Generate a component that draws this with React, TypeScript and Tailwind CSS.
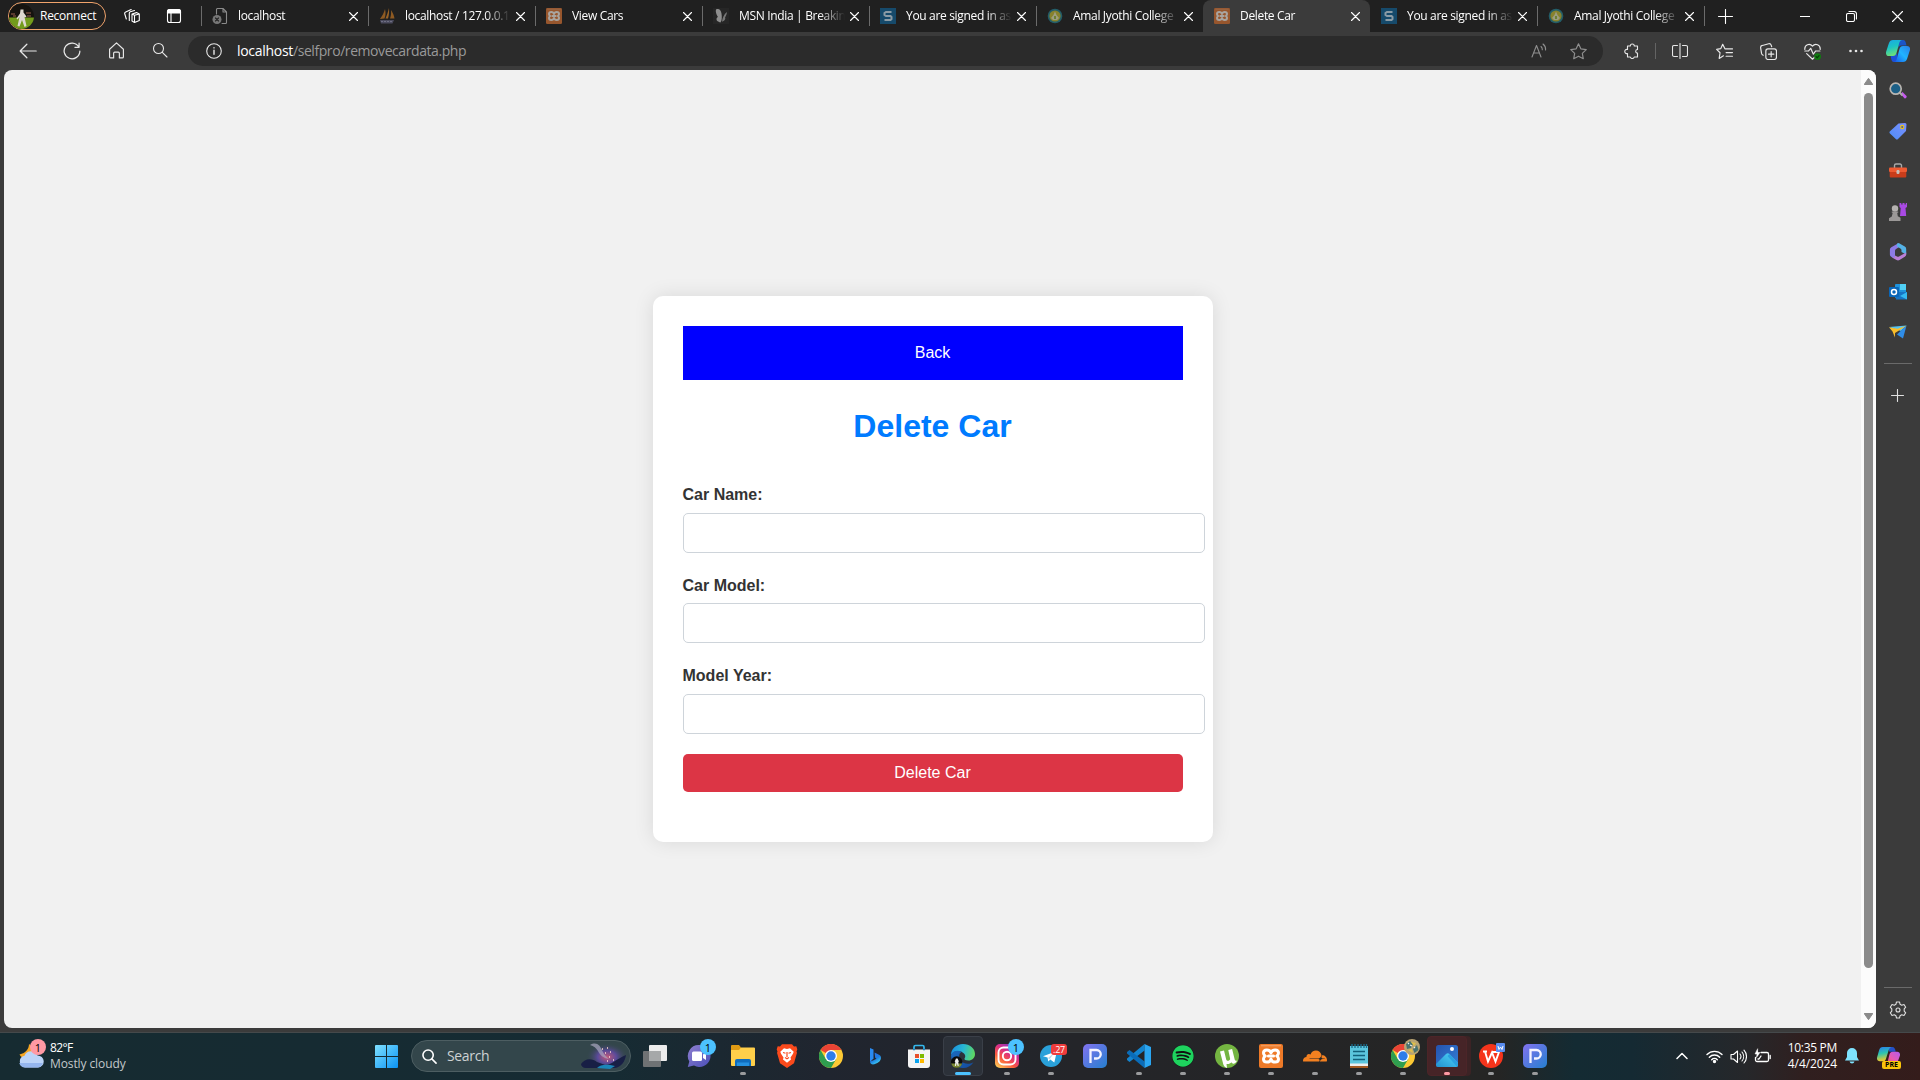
import React from "react";
import { SiCloudflare } from "react-icons/si";
import { FaSpotify } from "react-icons/fa";

type IconProps = { children: React.ReactNode; size?: number; box?: string; className?: string };

function Line({ children, size = 16, box = "0 0 16 16", className = "" }: IconProps) {
  return (
    <svg width={size} height={size} viewBox={box} fill="none" stroke="currentColor" strokeWidth="1.1" strokeLinecap="round" strokeLinejoin="round" className={`shrink-0 ${className}`}>
      {children}
    </svg>
  );
}

function Art({ children, size = 24, box = "0 0 24 24", className = "" }: IconProps) {
  return (
    <svg width={size} height={size} viewBox={box} className={`block shrink-0 ${className}`}>
      {children}
    </svg>
  );
}

/* ---------- tab favicons ---------- */

const BrokenPage = () => (
  <Line className="text-[#8a8a8a]">
    <path d="M4.500 6V1.500a1 1 0 0 1 1-1H11l3.500 3.500V14.500a1 1 0 0 1-1 1H10M11 .5V4h3.500" />
    <circle cx="5" cy="11.500" r="4.500" fill="#777" stroke="none" />
    <path d="M3.500 10l3 3M6.500 10l-3 3" stroke="#222" />
  </Line>
);

const Sails = () => (
  <Art size={16} box="0 0 16 16">
    <path d="M6 1c1 4 .5 7-.5 9.500L1 11c2-3 4-6 5-10z" fill="#8e5a22" />
    <path d="M10 0c.3 4 0 7-1 10.500L6.500 10.500C8 7 9 4 10 0z" fill="#9a6326" />
    <path d="M12 2c2 3 3 5.500 3.500 8.500h-4.500c1-3 1.300-5 1-8.500z" fill="#8e5a22" />
    <path d="M1 12h14l-1.500 3.500H2z" fill="#4a4a5c" />
    <path d="M2 13.500h11" stroke="#77778c" strokeWidth=".8" strokeDasharray="2 1" />
  </Art>
);

const XamppShape = ({ size, plate, ink }: { size: number; plate: string; ink: string }) => (
  <Art size={size}>
    <rect width="24" height="24" rx="2" fill={plate} />
    <path d="M2 1.800h20" stroke={ink} strokeOpacity=".35" strokeWidth="1" />
    <path
      d="M12 9C11 5 4.500 5 4.500 9c0 1.500.9 2.400 1.700 3-.8.600-1.700 1.500-1.700 3 0 4 6.500 4 7.500 0 1 4 7.500 4 7.500 0 0-1.500-.9-2.400-1.700-3 .8-.6 1.700-1.500 1.700-3 0-4-6.500-4-7.500 0z"
      fill="none"
      stroke={ink}
      strokeWidth="3"
      strokeLinejoin="round"
    />
    <path d="M9.500 12h5" stroke={ink} strokeWidth="3.200" strokeLinecap="round" />
  </Art>
);

const XamppFav = () => <XamppShape size={16} plate="#97562d" ink="#a9a49f" />;

const Butterfly = () => (
  <Art size={16} box="0 0 16 16">
    <rect width="16" height="16" fill="#262626" />
    <path d="M3 1.500c3-1.500 5 1 5.500 4 .5 3 .5 7-1 9-2-1-4-1-4-3.500 0-1.500 1.500-2 1.500-2S2 4.500 3 1.500z" fill="#8e8e8e" />
    <path d="M14 4c-3 2-4.500 6-5 9.500 2 0 4-2.500 3-4C13 8 13.800 6 14 4z" fill="#777" />
  </Art>
);

const BlueS = () => (
  <Art size={16} box="0 0 16 16">
    <rect width="16" height="16" fill="#164a6b" />
    <path d="M11.500 4H6L4.500 5v2L6 8h4.500l1 1v2l-1 1H4.500" fill="none" stroke="#8b9ba5" strokeWidth="2" />
  </Art>
);

const Crest = () => (
  <Art size={16} box="0 0 16 16">
    <circle cx="8" cy="8" r="7.300" fill="#235d68" />
    <circle cx="8" cy="8" r="5.600" fill="#87822c" />
    <path d="M8 3.500l1.500 3.500 2.500 3-2 2H6l-2-2 2.500-3z" fill="#9c9d80" />
    <path d="M7 8h2v3H7z" fill="#6c8032" />
  </Art>
);

type Tab = { title: string; icon: () => React.JSX.Element; active?: boolean; edge?: boolean };

const tabs: Tab[] = [
  { title: "localhost", icon: BrokenPage },
  { title: "localhost / 127.0.0.1", icon: Sails },
  { title: "View Cars", icon: XamppFav },
  { title: "MSN India | Breakin", icon: Butterfly },
  { title: "You are signed in as", icon: BlueS },
  { title: "Amal Jyothi College", icon: Crest },
  { title: "Delete Car", icon: XamppFav, active: true },
  { title: "You are signed in as", icon: BlueS, edge: true },
  { title: "Amal Jyothi College", icon: Crest },
];

const fade = "[mask-image:linear-gradient(to_right,black_80px,transparent_106px)]";

function TabStrip() {
  return (
    <header className="flex h-8 shrink-0 items-center bg-[#202020] text-xs tracking-[-0.33px] text-white">
      <div className="ml-2 flex h-7 w-[98px] items-center rounded-full border border-[#f0a36b]">
        <Art size={25} box="0 0 25 25" className="overflow-hidden rounded-full">
          <rect width="25" height="25" fill="#16130f" />
          <rect y="13.500" width="25" height="12" fill="#739b1c" />
          <path d="M2 10h4M17 9h5M4 12h3M18 12h4" stroke="#70483a" strokeWidth="1.500" />
          <path d="M11.500 5.500h3v3l3 4-1.500 1-.5-.5 2 9-2 1-2.500-7-2.500 6.500-2-.5 2-9-2 2.500-1-1 3.500-5z" fill="#ddd8cf" />
        </Art>
        <span className="ml-[6px] tracking-[-0.27px]">Reconnect</span>
      </div>
      <Line className="ml-[18px]">
        <path d="M8 6l4.500-1.400 2.800 1.400v6.500L10.500 14.500 8 13zM8 6l2.500 1.300v7.200M10.500 7.300L15.300 6M5.300 12.500V5.200a1.500 1.500 0 0 1 1-1.400l4.200-1.300M2.300 11l-1.500-5A1.500 1.500 0 0 1 1.700 4l5.500-2.500" />
      </Line>
      <Line className="ml-[26px]">
        <rect x="1.500" y="1.500" width="13" height="13" rx="2" />
        <path d="M1.500 5V3.500a2 2 0 0 1 2-2h9a2 2 0 0 1 2 2V5z" fill="currentColor" />
        <path d="M5 5v9.500" />
      </Line>
      <div className="ml-[19px] flex h-8 items-center">
        {tabs.map((t, i) => {
          const Icon = t.icon;
          const bare = t.active || t.edge;
          return (
            <div key={i} className={t.active ? "flex h-8 w-[167px] items-center rounded-t-lg bg-[#3b3b3b]" : "flex h-8 w-[167px] items-center"}>
              <div className={bare ? "h-5 w-px" : "h-5 w-px bg-[#6b6b6b]"} />
              <div className="ml-[10px] flex">
                <Icon />
              </div>
              <div className={`ml-[10px] w-[108px] overflow-hidden whitespace-nowrap ${fade}`}>{t.title}</div>
              <Line size={9} box="0 0 9 9" className="ml-[3px]">
                <path d="M.5 .5l8 8M8.500 .5l-8 8" />
              </Line>
            </div>
          );
        })}
        <div className="h-5 w-px bg-[#6b6b6b]" />
      </div>
      <Line size={15} box="0 0 15 15" className="ml-[13px]">
        <path d="M7.500 .5v14M.5 7.500h14" />
      </Line>
      <div className="ml-auto flex h-8 items-center">
        <div className="flex w-[46px] justify-center"><Line size={10} box="0 0 10 10"><path d="M0 5.500h10" /></Line></div>
        <div className="flex w-[46px] justify-center">
          <Line size={11} box="0 0 11 11">
            <rect x=".5" y="2.500" width="8" height="8" rx="1.500" />
            <path d="M3 .5h5a2.500 2.500 0 0 1 2.500 2.500v5" />
          </Line>
        </div>
        <div className="flex w-[46px] justify-center"><Line size={11} box="0 0 11 11"><path d="M.5 .5l10 10M10.500 .5l-10 10" /></Line></div>
      </div>
    </header>
  );
}

/* ---------- toolbar ---------- */

const CopilotMark = ({ size = 24 }: { size?: number }) => (
  <Art size={size}>
    <defs>
      <linearGradient id="cpA" x1="0" y1="0" x2=".3" y2="1">
        <stop offset="0" stopColor="#1aa7e8" /><stop offset=".5" stopColor="#1cc3c4" /><stop offset="1" stopColor="#6be079" />
      </linearGradient>
      <linearGradient id="cpB" x1="0" y1="1" x2="1" y2="0">
        <stop offset="0" stopColor="#1557e8" /><stop offset=".5" stopColor="#20b4ff" /><stop offset="1" stopColor="#2a7fe8" />
      </linearGradient>
    </defs>
    <path d="M12 1h5c2 0 2.500 1.500 3 3.500l.5 2H16c-2 0-3 .5-3.500 2.500z" fill="#1b54c8" />
    <path d="M12 23H8c-2 0-2.300-1.500-3-4L4.500 16H8c1.500 0 2.500-.7 3-2.500z" fill="#1d4fd8" />
    <path d="M7 1h9c-2 .5-2.500 2-3 4l-2.500 9c-.6 2-1.500 3-3.500 3H3c-2.500 0-3.500-2-2.800-4.500L2.800 4.500C3.500 2 5 1 7 1z" fill="url(#cpA)" />
    <path d="M17 23H8c2-.5 2.500-2 3-4l2.500-9c.6-2 1.500-3 3.500-3h4c2.500 0 3.500 2 2.800 4.500l-2.600 8C20.500 22 19 23 17 23z" fill="url(#cpB)" />
  </Art>
);

function Cell({ children }: { children: React.ReactNode }) {
  return <div className="flex w-11 shrink-0 justify-center">{children}</div>;
}

const star = "M8 .8l2.200 4.700 5.100.7-3.700 3.500.9 5.100L8 12.400l-4.500 2.400.9-5.100L.7 6.200l5.100-.7z";

function Toolbar() {
  return (
    <div className="flex h-[38px] shrink-0 items-center bg-[#3b3b3b] text-[#e8e8e8]">
      <div className="ml-[6px] flex">
        <Cell><Line size={18} box="0 0 16 16"><path d="M15.300 8H1M7 2L1 8l6 6" /></Line></Cell>
        <Cell><Line size={18}><path d="M14 4.300A7 7 0 1 0 15 8M14.300 1v3.700h-3.700" /></Line></Cell>
        <Cell><Line size={17}><path d="M1.500 6.800L8 .8l6.500 6V14a1 1 0 0 1-1 1h-2.800v-4.500a1 1 0 0 0-1-1H6.300a1 1 0 0 0-1 1V15H2.500a1 1 0 0 1-1-1z" /></Line></Cell>
        <Cell><Line size={16}><circle cx="6.500" cy="6.500" r="5" /><path d="M10.300 10.300L15 15" /></Line></Cell>
      </div>
      <div className="ml-[6px] flex h-[30px] w-[1415px] items-center rounded-full bg-[#2b2b2b]">
        <Line size={16} className="ml-[18px]"><circle cx="8" cy="8" r="7.300" /><path d="M8 7.300v4M8 4.800v.1" strokeWidth="1.400" /></Line>
        <div className="ml-[15px] text-sm tracking-[-0.43px] text-[#9a9a9a]"><span className="tracking-[-0.3px] text-white">localhost</span>/selfpro/removecardata.php</div>
        <Line size={16} className="ml-auto text-[#8f8f8f]"><path d="M1 14L5.500 2.500 10 14M2.500 10h6M10 3.500a4 4 0 0 1 1.300 3.300M12 1a7 7 0 0 1 2.600 6" /></Line>
        <Line size={17} className="ml-[23px] mr-[16px] text-[#8f8f8f]"><path d={star} /></Line>
      </div>
      <div className="ml-[7px] flex items-center">
        <Cell><Line size={16}><path d="M3.500 3h2.800a2 2 0 1 1 4 0h3.200v3.500a1.800 1.800 0 0 0 0 3.600V14h-3.300a2 2 0 0 1-3.900 0H3.500v-3.500a2.100 2.100 0 1 1 0-4z" /></Line></Cell>
        <div className="ml-px mr-[2px] h-4 w-px bg-[#646464]" />
        <Cell><Line size={16}><path d="M5.500 2.500H2a1.500 1.500 0 0 0-1.500 1.500v8A1.500 1.500 0 0 0 2 13.500h3.500M10.500 2.500H14A1.500 1.500 0 0 1 15.500 4v8a1.500 1.500 0 0 1-1.500 1.500h-3.500M8 .5v15" /></Line></Cell>
        <Cell><Line size={17}><path d="M9 5.500h-.6L6.300 1.200 4.500 5.300.6 6l3.200 3.200L3 14.500l4-2.500M9.500 5.500h6M9.500 9h6M9.500 12.500h6" /></Line></Cell>
        <Cell><Line size={17}><rect x="5.500" y="5.500" width="10" height="10" rx="2" /><path d="M10.500 8v5M8 10.500h5M3 11.500A2.500 2.500 0 0 1 1.500 10L.6 4.500a2 2 0 0 1 1.600-2.200l6-1.600A2 2 0 0 1 10.500 2l.5 1.500" /></Line></Cell>
        <Cell>
          <Line size={17}>
            <path d="M.8 6C.3 1.500 5.500-.2 8 3c2.500-3.200 7.700-1.500 7.200 3M.8 7.500h3.500l2-2.500 2.500 5.500L11 7.500h4M2.500 10L8 15.300l2-2" />
            <circle cx="12.800" cy="12.800" r="3.200" fill="#107c10" stroke="none" />
            <path d="M11.400 12.900l1 1 1.800-2" stroke="#083a08" />
          </Line>
        </Cell>
        <Cell><Line size={16}><g fill="currentColor" stroke="none"><circle cx="2.500" cy="8" r="1.300" /><circle cx="8" cy="8" r="1.300" /><circle cx="13.500" cy="8" r="1.300" /></g></Line></Cell>
      </div>
      <div className="mr-[10px] ml-auto"><CopilotMark /></div>
    </div>
  );
}

/* ---------- page ---------- */

function Field({ label, className }: { label: string; className: string }) {
  return (
    <div className={className}>
      <label className="block text-base leading-[18px] font-bold text-[#333]">{label}</label>
      <input className="mt-[8.500px] block h-10 w-[522px] rounded-[5px] border border-[#ced4da] bg-white" />
    </div>
  );
}

function Page() {
  return (
    <div className="flex min-w-0 flex-1 overflow-hidden rounded-lg bg-[#f1f1f1]">
      <main className="flex-1 font-['Liberation_Sans',Arial,sans-serif]">
        <div className="mt-[226px] ml-[648.500px] h-[546px] w-[560px] rounded-[10px] bg-white p-[30px] shadow-[0_0_20px_rgba(0,0,0,0.1)]">
          <button className="block h-[54px] w-full bg-[#0000ff] text-base text-white">Back</button>
          <h2 className="mt-[28px] text-center text-[32px] leading-9 font-bold text-[#007bff]">Delete Car</h2>
          <Field label="Car Name:" className="mt-[42px]" />
          <Field label="Car Model:" className="mt-[24px]" />
          <Field label="Model Year:" className="mt-[24px]" />
          <button className="mt-[20px] block h-[38px] w-full rounded-[5px] bg-[#dc3545] text-base text-white">Delete Car</button>
        </div>
      </main>
      <div className="flex w-[15px] flex-col items-center bg-[#fcfcfc]">
        <Art size={9} box="0 0 9 7" className="mt-[7px]"><path d="M4.500 .3L8.800 6.500H.2z" fill="#8b8b8b" stroke="#8b8b8b" strokeLinejoin="round" /></Art>
        <div className="mt-[7px] h-[875px] w-[9px] rounded-full bg-[#8b8b8b]" />
        <Art size={9} box="0 0 9 7" className="mt-auto mb-[7px]"><path d="M4.500 6.700L8.800 .5H.2z" fill="#8b8b8b" stroke="#8b8b8b" strokeLinejoin="round" /></Art>
      </div>
    </div>
  );
}

/* ---------- sidebar ---------- */

function Sidebar() {
  return (
    <aside className="flex w-11 shrink-0 flex-col items-center pr-px text-[#e0e0e0]">
      <div className="mt-[12px] flex flex-col gap-[22.200px]">
        <Art size={18} box="0 0 18 18">
          <path d="M11.500 12l2-2 4 4c.8 1-1 3-2 2.200z" fill="#c75af0" />
          <path d="M10 10l3.500 3.500" stroke="#aaa" strokeWidth="2" />
          <circle cx="6.700" cy="6.700" r="5.500" fill="#1c5f86" stroke="#b9b5b0" strokeWidth="1.700" />
        </Art>
        <Art size={18} box="0 0 18 18">
          <defs><linearGradient id="tag" x1="1" y1="0" x2="0" y2="1"><stop stopColor="#7b90ff" /><stop offset="1" stopColor="#4e8cf5" /></linearGradient></defs>
          <path d="M9.500 1.500L16 1a1.500 1.500 0 0 1 1.500 1.500L17 9l-8 8c-.8.700-1.500.700-2.200 0L1 11.500c-.7-.8-.7-1.500 0-2.300z" fill="url(#tag)" />
          <circle cx="13.200" cy="5" r="1.600" fill="#4858a8" stroke="#e8c21c" strokeWidth="1.200" />
        </Art>
        <Art size={18} box="0 0 18 18">
          <path d="M5.500 6V3.500a1.500 1.500 0 0 1 1.500-1.500h4a1.500 1.500 0 0 1 1.500 1.500V6" fill="none" stroke="#a9a9a9" strokeWidth="1.400" />
          <rect x="0" y="5.500" width="18" height="4.500" rx="1" fill="#ef5b32" />
          <path d="M.7 10h16.600v4.500a1 1 0 0 1-1 1H1.700a1 1 0 0 1-1-1z" fill="#c93d1b" />
          <rect x="7.500" y="8" width="3" height="4" rx="1.200" fill="#c7c1bb" />
        </Art>
        <Art size={18} box="0 0 18 18">
          <path d="M10.500 0h1.800v1.500h1.200V0h2v1.500h1.300V0H18v4l-1.500 1 .7 8H11l.7-8-1.200-1z" fill="#a94ae4" />
          <circle cx="6" cy="5.500" r="3.200" fill="#b5b2b0" />
          <path d="M2.800 8.500h6.400v1.300H8.200l.6 3.500 2.700 1.500V18H0v-2.800l2.800-1.700.9-3.700h-.9z" fill="#9b9897" />
        </Art>
        <Art size={18} box="0 0 18 18">
          <path d="M9.800 0L2.300 4.200A2.600 2.600 0 0 0 .9 6.500v5c0 1 .5 1.800 1.300 2.300L4 14.900c1 .5 2-.1 2-1.200V7.800c0-.9.4-1.500 1.100-1.900L9.800 4.300z" fill="#8d7be6" />
          <path d="M8 .8c1-.6 2-.6 3 0l4.800 2.800A2.600 2.600 0 0 1 17.200 6v5.500L12.500 9V7.300c0-.9-.4-1.500-1.100-1.900L8 3.500z" fill="#55b2e6" />
          <path d="M17.200 9.500v2a2.600 2.600 0 0 1-1.400 2.300L10.500 17a3 3 0 0 1-3 0L3 14.400c2 .6 3-.2 3-1.900l2 .9c.7.400 1.300.4 2 0z" fill="#b97fd6" />
        </Art>
        <Art size={18} box="0 0 18 18">
          <rect x="6" y="1" width="11" height="14" rx="1" fill="#1e93dc" />
          <path d="M11 1h6v6h-6z" fill="#50d0f5" />
          <path d="M6 9h12v6.500a1 1 0 0 1-1 1H7z" fill="#1674c4" />
          <path d="M18 9v7.500L11 13z" fill="#35b8f0" />
          <rect x="0" y="4" width="10" height="10" rx="1" fill="#0a66b8" />
          <circle cx="5" cy="9" r="2.500" fill="none" stroke="#fff" strokeWidth="1.500" />
        </Art>
        <Art size={18} box="0 0 18 18">
          <path d="M0 4l17.500-1.500L12 8z" fill="#55c3f2" />
          <path d="M17.500 2.500L14 15.500 8 11.500z" fill="#2f8de8" />
          <path d="M0 4.200l8.500 1.500L17.500 2.700 6 10v4.500L3.500 8.500z" fill="#f8bd2b" />
        </Art>
      </div>
      <div className="mt-[22px] h-px w-7 shrink-0 bg-[#6a6a6a]" />
      <Line size={13} box="0 0 13 13" className="mt-[25px]"><path d="M6.500 .5v12M.5 6.500h12" /></Line>
      <div className="mt-auto h-px w-7 shrink-0 bg-[#6a6a6a]" />
      <Line size={18} box="0 0 18 18" className="mt-[13px] mb-[13px]">
        <path d="M7.500 1h3l.6 2.300 1.600.9L15 3.500l1.700 2.700-1.500 1.700v2.200l1.500 1.700L15 14.500l-2.300-.7-1.600.9-.6 2.300h-3l-.6-2.300-1.600-.9-2.300.7-1.700-2.700 1.500-1.700V7.900L1.300 6.200 3 3.500l2.300.7 1.600-.9z" />
        <circle cx="9" cy="9" r="2" />
      </Line>
    </aside>
  );
}

/* ---------- taskbar ---------- */

const TaskView = () => (
  <Art>
    <rect x="6" y="1" width="18" height="16" rx="1" fill="#ececec" />
    <rect x="0" y="7" width="18" height="16" rx="1" fill="#6f7274" />
    <path d="M6 7h12v10H6z" fill="#a6a8a9" />
  </Art>
);

const Badge = ({ n }: { n: string }) => (
  <span className="absolute -top-[5px] left-[13px] flex size-4 items-center justify-center rounded-full bg-[#4cc2ff] text-[11px] leading-none text-black">{n}</span>
);

const Chat = () => (
  <div className="relative">
    <Art>
      <defs><linearGradient id="chat" x1="0" y1="0" x2="1" y2="1"><stop stopColor="#8f7fd0" /><stop offset="1" stopColor="#4a4fb8" /></linearGradient></defs>
      <path d="M12 1a11 11 0 1 1-5 20.500L.8 23l1.500-5.500A11 11 0 0 1 12 1z" fill="url(#chat)" />
      <rect x="5" y="7.500" width="10" height="9.500" rx="1.500" fill="#fff" />
      <path d="M16 10.500l3-2v7.500l-3-2z" fill="#fff" />
    </Art>
    <Badge n="1" />
  </div>
);

const Folder = () => (
  <Art>
    <path d="M0 2a1 1 0 0 1 1-1h7l2 2.500V6H0z" fill="#e09b14" />
    <path d="M0 6h8l2-2.500h13a1 1 0 0 1 1 1V21a1 1 0 0 1-1 1H1a1 1 0 0 1-1-1z" fill="#ffcf4a" />
    <path d="M4 17a2 2 0 0 1 2-2h12a2 2 0 0 1 2 2v5H4z" fill="#0f6cbd" />
    <path d="M6 18.500h12V22H6z" fill="#2490e0" />
  </Art>
);

const Chrome = () => (
  <Art>
    <circle cx="12" cy="12" r="12" fill="#fcc934" />
    <path d="M12 12L1.600 6A12 12 0 0 1 22.400 6H12z" fill="#ea4335" />
    <path d="M1.600 6A12 12 0 0 0 12 24l5.200-9L12 12l-5.200 3z" fill="#2f9e4f" />
    <circle cx="12" cy="12" r="6" fill="#fff" />
    <circle cx="12" cy="12" r="4.700" fill="#2f7de9" />
  </Art>
);

const Bing = () => (
  <Art>
    <defs><linearGradient id="bing" x1="0" y1="0" x2=".6" y2="1"><stop stopColor="#2c6be8" /><stop offset=".6" stopColor="#1e7be0" /><stop offset="1" stopColor="#3ed0f5" /></linearGradient></defs>
    <path d="M7 4l3.500 1.500v9l-3.500 3.500z" fill="#2a8af0" />
    <path d="M11.500 8.500l4.500 2.300c1.800 1 2.300 2.500 1.800 4.200-.5 2-2 3-3.500 4l-3 1.300c-2.300.5-4.300-.5-4.300-2.800l3.500-1.200 3-1.500-1.300-1z" fill="url(#bing)" />
  </Art>
);

const Store = () => (
  <Art>
    <path d="M7 7V3a1.500 1.500 0 0 1 1.500-1.500h7A1.500 1.500 0 0 1 17 3v4" fill="none" stroke="#35b7ea" strokeWidth="1.700" />
    <path d="M1 5.500h22V21a3 3 0 0 1-3 3H4a3 3 0 0 1-3-3z" fill="#f4f4f4" />
    <path d="M6 5.500h2M16 5.500h2" stroke="#1b84c4" strokeWidth="1.600" />
    <path d="M8 10h4v4H8z" fill="#e8502c" /><path d="M13 10h4v4h-4z" fill="#7fba00" />
    <path d="M8 15h4v4H8z" fill="#0aa4ef" /><path d="M13 15h4v4h-4z" fill="#ffb900" />
  </Art>
);

const EdgeArt = () => (
  <Art>
    <defs>
      <linearGradient id="edA" x1="0" y1=".3" x2="1" y2=".5"><stop stopColor="#1a8fe0" /><stop offset=".5" stopColor="#28b8d4" /><stop offset="1" stopColor="#5fd860" /></linearGradient>
      <linearGradient id="edB" x1="0" y1="0" x2="1" y2="1"><stop stopColor="#1b6cc0" /><stop offset="1" stopColor="#134a9b" /></linearGradient>
    </defs>
    <path d="M0 11C0 5 5 0 12 0c7 0 12 4.500 12 10 0 4-3 6.500-6.500 6.500-3 0-4.500-1-4-2 1.200-1.500 1-3.500-.5-5C9 5.500 2.500 6.500 0 11z" fill="url(#edA)" />
    <path d="M0 11c1.500-4 7-5.500 10.500-3C7.500 9.500 7.500 14 10 17c3 3.300 8 3.600 12.500 1.200C20 22 16.500 24 12 24 5 24 0 19 0 11z" fill="url(#edB)" />
    <circle cx="5.700" cy="18" r="5.700" fill="#0c0c0c" />
    <path d="M.2 19.500h11a5.700 5.700 0 0 1-11 0z" fill="#7c8a35" />
    <path d="M5 14.500h1.600l1.300 3-.6.500.4 4h-1l-.9-2.700-.9 2.700h-1l.4-4-.6-.5z" fill="#eee" />
  </Art>
);

const Insta = () => (
  <div className="relative">
    <Art>
      <defs><linearGradient id="ig" x1=".1" y1="1" x2=".8" y2="0"><stop stopColor="#ffd25a" /><stop offset=".35" stopColor="#fb5a3c" /><stop offset=".65" stopColor="#d62d8a" /><stop offset="1" stopColor="#6a3bd0" /></linearGradient></defs>
      <rect width="24" height="24" rx="5" fill="url(#ig)" />
      <rect x="3.500" y="3.500" width="17" height="17" rx="5" fill="none" stroke="#fff" strokeWidth="1.900" />
      <circle cx="12" cy="12" r="4.200" fill="none" stroke="#fff" strokeWidth="1.900" />
    </Art>
    <Badge n="1" />
  </div>
);

const Telegram = () => (
  <div className="relative">
    <Art>
      <circle cx="12" cy="12" r="11" fill="#2aa1da" />
      <path d="M4 12.300L18 7l-2.700 11.500-4-3-2 2-.8-4z" fill="#fff" />
      <path d="M9 14l6-5-4.500 6.500z" fill="#b8dcf0" />
    </Art>
    <span className="absolute top-0 left-[12px] flex h-[11px] w-4 items-center justify-center rounded-[3px] bg-[#ee3c3c] text-[9px] leading-none tracking-tight text-white">.27</span>
  </div>
);

const PApp = () => (
  <Art>
    <defs><linearGradient id="pp" x1="0" y1="0" x2="1" y2="1"><stop stopColor="#8272f0" /><stop offset="1" stopColor="#2580cf" /></linearGradient></defs>
    <rect width="24" height="24" rx="5" fill="url(#pp)" />
    <path d="M7.500 19V6h6a4 4 0 0 1 0 8.500H11" fill="none" stroke="#f4f4ff" strokeWidth="2.300" />
  </Art>
);

const Code = () => (
  <Art>
    <path d="M0 16l2.500 2L17.500 6.500V0L0 14.500z" fill="#1384cf" />
    <path d="M0 8l2.500-2 15 11.500V24L0 9.500z" fill="#0a6cb8" />
    <path d="M17.500 0L24 3v18l-6.500 3z" fill="#2aa6f2" />
  </Art>
);

const Spotify = () => (
  <div className="flex size-6 items-center justify-center">
    <div className="flex size-[22px] items-center justify-center rounded-full bg-[#111]"><FaSpotify size={22} color="#1ed35e" /></div>
  </div>
);

const Torrent = () => (
  <Art>
    <circle cx="12" cy="12" r="12" fill="#74b541" />
    <path d="M12 24c-2.500-1-3.500-2.500-3.800-4L5 7.500l4-1 2.200 9c.6 2 3.500 1.500 4-.5L13.300 6l3.800-1 2.600 10.500c.4 1.300 1.300 1.500 2.300 1.300-1.500 3-4.500 4-5.500 1.500-1.300 1.500-3 2-5 1.700z" fill="#fff" />
  </Art>
);

const Xampp = () => <XamppShape size={24} plate="#ee7a28" ink="#fff" />;

const Notepad = () => (
  <Art>
    <rect x="3" y="2" width="18" height="20" fill="#5cc6de" />
    <path d="M3 19.500h18V22H3z" fill="#eee" /><path d="M3 22h18v2H3z" fill="#a35a22" />
    <path d="M5 0v4M8 0v4M11 0v4M14 0v4M17 0v4M19.500 0v4" stroke="#1b6d8c" strokeWidth="1.300" />
    <path d="M6 7.500h12M6 11.500h12M6 15.500h12" stroke="#12617c" strokeWidth="1.500" />
  </Art>
);

const ChromeProfile = () => (
  <div className="relative">
    <Chrome />
    <div className="absolute -top-[5px] left-[13px]">
      <Art size={16} box="0 0 16 16">
        <circle cx="8" cy="8" r="8" fill="#b9a472" />
        <path d="M2 5l4-3 3 3-2 4-4 1zM9 10l4-4 1.500 5-4 3z" fill="#48726e" />
        <path d="M7 3l5 1-2 3zM4 11l4-1 1 4z" fill="#e0c04a" />
        <path d="M6 6l2 1M10 9l1-1M4 4l1 1" stroke="#eee" strokeWidth="1.300" />
      </Art>
    </div>
  </div>
);

const Photos = () => (
  <Art>
    <defs>
      <linearGradient id="ph" x1="0" y1="0" x2="1" y2="1"><stop stopColor="#2552ae" /><stop offset="1" stopColor="#3380d8" /></linearGradient>
      <linearGradient id="ph2" x1="1" y1="0" x2="0" y2="1"><stop stopColor="#4fd6fa" /><stop offset="1" stopColor="#2390cf" /></linearGradient>
    </defs>
    <rect x="1" y="1" width="22" height="22" rx="2.500" fill="url(#ph)" />
    <path d="M1 20l10-10a2.500 2.500 0 0 1 3.500 0l8.500 9V21a2 2 0 0 1-2 2H3a2 2 0 0 1-2-2z" fill="url(#ph2)" />
    <path d="M14.500 10l8.500 9v2a2 2 0 0 1-1 1.700L12.500 12z" fill="#2a9fe0" />
    <circle cx="17" cy="5" r="2" fill="#fff" />
  </Art>
);

const Wps = () => (
  <div className="relative">
    <Art>
      <circle cx="12" cy="12" r="12" fill="#f5341c" />
      <path d="M4 7.500h4M6 7.500L9 17.500l4-9 3.500 9 3.500-9.500h-7" fill="none" stroke="#fff" strokeWidth="1.900" />
    </Art>
    <div className="absolute -top-px left-[17px]">
      <Art size={9} box="0 0 9 9">
        <rect width="9" height="9" rx="1" fill="#5a8df0" />
        <path d="M2 3l1 3.500L4.500 4l1.500 2.500L7 3" fill="none" stroke="#fff" strokeWidth="1" />
      </Art>
    </div>
  </div>
);

type App = { art: () => React.JSX.Element; state?: "open" | "focus" | "alert" };

const Brave = () => (
  <Art>
    <path d="M7 .3h10l2 2.200 2.300-.3 1 3-.8 2.500.5 1-3 10.500L12 24l-7-4.800L2 8.700l.5-1L1.700 5.200l1-3 2.300.3z" fill="#fb4a1c" />
    <path d="M12 5l3-.8 3.700 3.600-.7 2-2.500 3.700.5 2L12 18.800 8 15.500l.5-2L6 9.800l-.7-2L9 4.200z" fill="#fff" />
    <path d="M8 8.500l2.500.8M16 8.500l-2.500.8M12 8v5M10 13.500l2 1.300 2-1.300" stroke="#fb4a1c" strokeWidth="1.200" fill="none" />
  </Art>
);

const Flare = () => (
  <div className="flex size-6 items-center justify-center"><SiCloudflare size={24} color="#f38020" /></div>
);

const apps: App[] = [
  { art: TaskView },
  { art: Chat },
  { art: Folder, state: "open" },
  { art: Brave },
  { art: Chrome },
  { art: Bing },
  { art: Store },
  { art: EdgeArt, state: "focus" },
  { art: Insta, state: "open" },
  { art: Telegram, state: "open" },
  { art: PApp },
  { art: Code, state: "open" },
  { art: Spotify, state: "open" },
  { art: Torrent, state: "open" },
  { art: Xampp, state: "open" },
  { art: Flare, state: "open" },
  { art: Notepad, state: "open" },
  { art: ChromeProfile, state: "open" },
  { art: Photos, state: "alert" },
  { art: Wps, state: "open" },
  { art: PApp, state: "open" },
];

function TaskApp({ art: Icon, state }: App) {
  const tile =
    state === "focus" ? "border-[#3a3f48] bg-[#2c3139]" : state === "alert" ? "border-[#4c2528] bg-[#462427] shadow-[4px_0_0_#3c2325]" : "border-transparent";
  const bar = state === "focus" ? "w-4 bg-[#4cc2ff]" : state === "alert" ? "w-[6px] bg-[#ff99a4]" : state === "open" ? "w-[6px] bg-[#9a9b9d]" : "w-0";
  return (
    <div className="flex w-11 justify-center">
      <div className={`flex h-10 w-10 flex-col items-center rounded-[4px] border ${tile}`}>
        <div className="mt-[7px]"><Icon /></div>
        <div className={`mt-[4px] h-[3px] rounded-full ${bar}`} />
      </div>
    </div>
  );
}

function Taskbar() {
  return (
    <footer className="flex h-[48px] shrink-0 items-center border-t border-[#45494b] bg-[linear-gradient(to_right,#162b31_0%,#162b33_32%,#20252f_43%,#242529_56%,#252524_78%,#142b33_82%,#152a33_85%,#26272a_91%,#301f1f_94%,#341c1b_100%)] pb-px text-xs text-white">
      <div className="flex w-[375px] items-center">
        <div className="relative ml-[18px]">
          <Art size={26} box="0 0 26 26">
            <path d="M11 1c0 5-3 9-9.500 10.500C3 15 8 17 12 15s6-6 4-10z" fill="#f5a623" />
            <path d="M7 24.500a6 6 0 0 1-.5-11.800 7 7 0 0 1 13-.2A6 6 0 0 1 20 24.500z" fill="#bcd4f8" />
            <path d="M7 24.500a6 6 0 0 1-5.700-4.500h23.500a6 6 0 0 1-4.800 4.500z" fill="#95b6ee" />
          </Art>
          <span className="absolute -top-[4px] left-[12px] flex size-4 items-center justify-center rounded-full bg-[#ff99a4] text-[11px] leading-none text-black">1</span>
        </div>
        <div className="ml-[6px] leading-4 tracking-[-0.1px]">
          <div className="tracking-[-0.6px]">82°F</div>
          <div className="text-[#c3c8ca]">Mostly cloudy</div>
        </div>
      </div>
      <Art size={23} box="0 0 23 23">
        <defs><linearGradient id="win" x1="0" y1="0" x2="1" y2="1"><stop stopColor="#7fe0ff" /><stop offset="1" stopColor="#0a93f5" /></linearGradient></defs>
        <path d="M0 1a1 1 0 0 1 1-1h10v11H0zM12 0h10a1 1 0 0 1 1 1v10H12zM0 12h11v11H1a1 1 0 0 1-1-1zM12 12h11v10a1 1 0 0 1-1 1H12z" fill="url(#win)" />
      </Art>
      <div className="ml-[13px] flex h-8 w-[220px] items-center rounded-full border border-[#4d5e62] bg-[#33464b]">
        <Line size={15} className="ml-[10px]"><g strokeWidth="1.700"><circle cx="6.500" cy="6.500" r="5.500" /><path d="M10.500 10.500L15 15" /></g></Line>
        <span className="ml-[10px] text-sm tracking-[-0.35px] text-[#cdd2d4]">Search</span>
        <Art size={48} box="0 0 48 30" className="ml-auto mr-[2px] h-[30px]">
          <defs>
            <radialGradient id="neb"><stop stopColor="#c45a7a" /><stop offset=".45" stopColor="#5a4a9a" /><stop offset="1" stopColor="#33464b" stopOpacity="0" /></radialGradient>
          </defs>
          <ellipse cx="27" cy="16" rx="21" ry="14" fill="url(#neb)" />
          <path d="M10 4c7-4 10 1 12 5 2 5 4 6 7 9-6-1-9-4-11-8-2-3-4-5-8-6z" fill="#a9a7c0" opacity=".7" />
          <path d="M1 23c4-6 11-6 16-2l8 3c6 0 10-5 21-10-1 7-5 12-11 13H6c-3 0-5-2-5-4z" fill="#181f45" />
          <path d="M17 27c4-4 10-4 18-2l-5 3z" fill="#1b86b8" />
          <path d="M22 8h1M27 7h1M25 12h1M30 11h1M29 16h1M33 19h1M27 20h1" stroke="#ffd9d0" strokeWidth="1.600" />
        </Art>
      </div>
      <div className="ml-[2px] flex">
        {apps.map((a, i) => <TaskApp key={i} {...a} />)}
      </div>
      <div className="ml-auto flex items-center">
        <Line size={12} box="0 0 12 12"><path d="M1 8.500l5-5 5 5" strokeWidth="1.500" /></Line>
        <Line size={17} box="0 0 17 16" className="ml-[18px]"><g strokeWidth="1.400"><path d="M1 6a10.500 10.500 0 0 1 15 0M3.300 8.700a7.300 7.300 0 0 1 10.400 0M5.700 11.200a4 4 0 0 1 5.600 0" /><circle cx="8.500" cy="13" r="1" fill="currentColor" /></g></Line>
        <Line size={17} box="0 0 17 16" className="ml-[7px]"><path d="M1 6v4.500h2.500L7.500 14V2.500L3.500 6zM10 5.500a4 4 0 0 1 0 5M12 3.500a7 7 0 0 1 0 9M14 1.700a9.500 9.500 0 0 1 0 12.800" /></Line>
        <Line size={17} box="0 0 17 16" className="ml-[7px]"><g strokeWidth="1.300"><path d="M7 4h6a1.500 1.500 0 0 1 1.500 1.500v6A1.500 1.500 0 0 1 13 13H3a1.500 1.500 0 0 1-1.500-1.500V9M16.200 7v3" /><path d="M3.500 .5L1 5.500h2L2.500 9 6 4H4z" fill="currentColor" strokeWidth=".5" /><path d="M4 10.500h1l2-3" /></g></Line>
        <div className="ml-[10px] w-[56px] text-right leading-4 whitespace-nowrap">
          <div className="tracking-[-0.3px]">10:35 PM</div>
          <div className="tracking-[-0.1px]">4/4/2024</div>
        </div>
        <Art size={16} box="0 0 16 16" className="ml-[7px]">
          <path d="M8 0a5 5 0 0 1 5 5v4l2 3.500H1L3 9V5a5 5 0 0 1 5-5zM5.500 13.500h5a2.600 2.600 0 0 1-5 0z" fill="#7fe3ff" />
        </Art>
        <div className="relative mr-[20px] ml-[17px]">
          <Art size={23}>
            <defs>
              <linearGradient id="prA" x1="0" y1="0" x2=".2" y2="1"><stop stopColor="#2a7af0" /><stop offset=".5" stopColor="#2cc4b0" /><stop offset="1" stopColor="#f0c92a" /></linearGradient>
              <linearGradient id="prB" x1="0" y1="1" x2="1" y2="0"><stop stopColor="#f0603c" /><stop offset=".5" stopColor="#e85ab0" /><stop offset="1" stopColor="#b25af0" /></linearGradient>
            </defs>
            <path d="M11 2h5c2 0 3 2 3.500 5H13z" fill="#2450c8" />
            <path d="M6 2h9c-2 1-2.500 2-3 4L9.500 14c-.6 2-1.500 3-3.500 3H3c-2.500 0-3.500-2-2.800-4.500l2-7C3 3 4 2 6 2z" fill="url(#prA)" />
            <path d="M16 22H8c2-.5 2.500-2 3-4l2-8c.6-2 1.500-3 3.500-3H21c2.500 0 3.500 2 2.800 4.500L21 19c-.8 2-2 3-5 3z" fill="url(#prB)" />
          </Art>
          <span className="absolute top-[16px] left-[5px] flex h-[8px] w-[19px] items-center justify-center rounded-[2px] bg-[#fbc50b] text-[7px] leading-none font-bold text-black">PRE</span>
        </div>
      </div>
    </footer>
  );
}

export default function App() {
  return (
    <div className="flex h-screen w-screen flex-col overflow-hidden bg-[#3b3b3b] font-['Open_Sans','Noto_Sans',sans-serif]">
      <TabStrip />
      <Toolbar />
      <div className="flex min-h-0 flex-1">
        <div className="flex min-w-0 flex-1 pb-1 pl-1">
          <Page />
        </div>
        <Sidebar />
      </div>
      <Taskbar />
    </div>
  );
}
